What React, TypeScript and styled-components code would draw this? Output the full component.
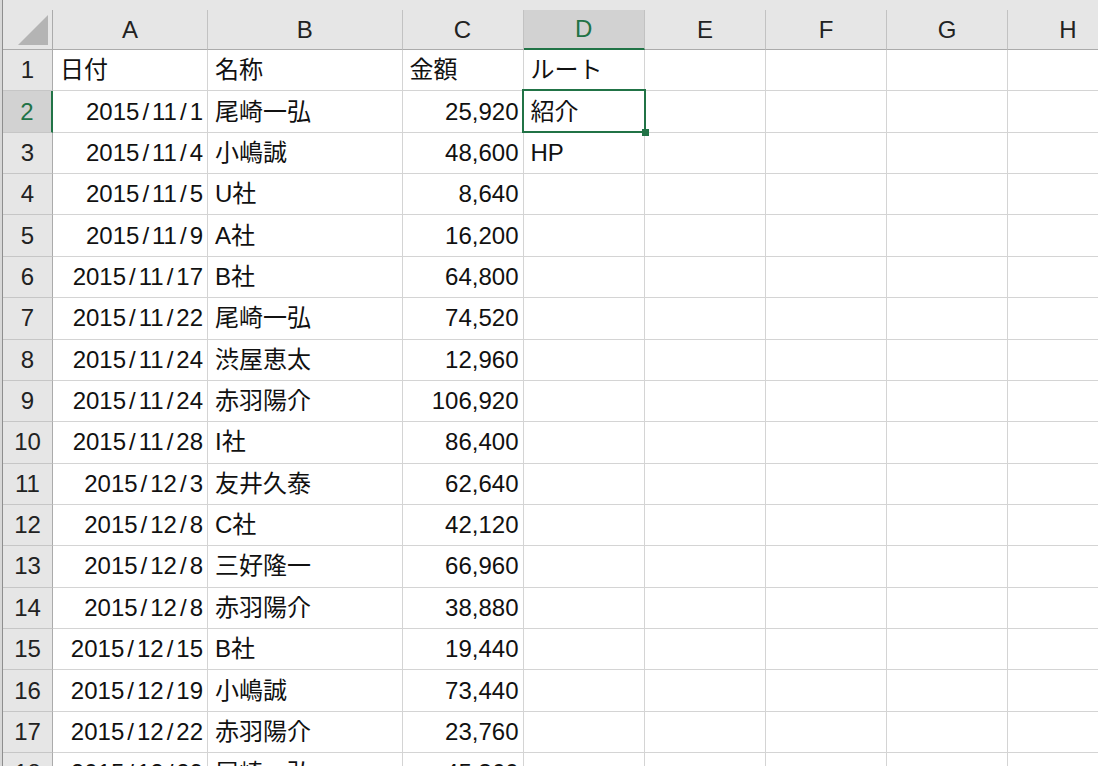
import React from "react";
import styled, { createGlobalStyle, css } from "styled-components";

const columns = ["A", "B", "C", "D", "E", "F", "G", "H"];
const colWidths = [155, 194.5, 121, 121.5, 121, 121, 121, 121];

const rows: string[][] = [
  ["日付", "名称", "金額", "ルート"],
  ["2015/11/1", "尾崎一弘", "25,920", "紹介"],
  ["2015/11/4", "小嶋誠", "48,600", "HP"],
  ["2015/11/5", "U社", "8,640", ""],
  ["2015/11/9", "A社", "16,200", ""],
  ["2015/11/17", "B社", "64,800", ""],
  ["2015/11/22", "尾崎一弘", "74,520", ""],
  ["2015/11/24", "渋屋恵太", "12,960", ""],
  ["2015/11/24", "赤羽陽介", "106,920", ""],
  ["2015/11/28", "I社", "86,400", ""],
  ["2015/12/3", "友井久泰", "62,640", ""],
  ["2015/12/8", "C社", "42,120", ""],
  ["2015/12/8", "三好隆一", "66,960", ""],
  ["2015/12/8", "赤羽陽介", "38,880", ""],
  ["2015/12/15", "B社", "19,440", ""],
  ["2015/12/19", "小嶋誠", "73,440", ""],
  ["2015/12/22", "赤羽陽介", "23,760", ""],
  ["2015/12/29", "尾崎一弘", "45,360", ""],
];

const activeRow = 2;
const activeCol = 3;

const GREEN = "#217346";

const GlobalStyle = createGlobalStyle`
  html, body {
    margin: 0;
    padding: 0;
    width: 1098px;
    height: 766px;
    overflow: hidden;
    background: #ffffff;
  }
  body {
    font-family: "Liberation Sans", "Noto Sans CJK JP", sans-serif;
  }
`;

const Page = styled.div`
  display: flex;
  width: 1098px;
  height: 766px;
  overflow: hidden;
`;

const LeftEdge = styled.div`
  flex: 0 0 3px;
  background: #d8d8d8;
  border-right: 1px solid #8e8e8e;
  box-sizing: border-box;
`;

const Main = styled.div`
  flex: 1;
  display: flex;
  flex-direction: column;
  min-width: 0;
`;

const TopStrip = styled.div`
  flex: 0 0 10px;
  background: #e6e6e6;
`;

const Sheet = styled.div`
  display: grid;
  grid-template-columns: 50px ${colWidths.map((w) => `${w}px`).join(" ")};
  grid-template-rows: 40px;
  grid-auto-rows: 41.37px;
  font-size: 24px;
  line-height: 1;
  color: #111;
`;

const Corner = styled.div`
  background: #e6e6e6;
  border-right: 1px solid #ababab;
  border-bottom: 1px solid #ababab;
  box-sizing: border-box;
  svg {
    display: block;
  }
`;

const ColHeader = styled.div<{ $active?: boolean }>`
  display: flex;
  align-items: center;
  justify-content: center;
  background: #e6e6e6;
  color: #222;
  border-right: 1px solid #c2c2c2;
  border-bottom: 1px solid #ababab;
  box-sizing: border-box;
  ${(p) =>
    p.$active &&
    css`
      background: #d2d2d2;
      color: ${GREEN};
      border-bottom: 2px solid ${GREEN};
    `}
`;

const RowHeader = styled.div<{ $active?: boolean }>`
  display: flex;
  align-items: center;
  justify-content: center;
  background: #e6e6e6;
  color: #222;
  border-right: 1px solid #ababab;
  border-bottom: 1px solid #c6c6c6;
  box-sizing: border-box;
  ${(p) =>
    p.$active &&
    css`
      background: #d2d2d2;
      color: ${GREEN};
      border-right: 2px solid ${GREEN};
    `}
`;

const Cell = styled.div<{ $align: "left" | "right"; $selected?: boolean }>`
  position: relative;
  display: flex;
  align-items: center;
  justify-content: ${(p) => (p.$align === "right" ? "flex-end" : "flex-start")};
  padding: ${(p) => (p.$align === "right" ? "0 4px 0 0" : "0 0 0 7px")};
  border-right: 1px solid #d4d4d4;
  border-bottom: 1px solid #d4d4d4;
  box-sizing: border-box;
  white-space: nowrap;
  overflow: visible;
  background: #fff;
  ${(p) =>
    p.$selected &&
    css`
      z-index: 2;
      &::before {
        content: "";
        position: absolute;
        left: -2px;
        top: -2px;
        right: -2px;
        bottom: -1px;
        border: 2px solid ${GREEN};
        pointer-events: none;
      }
      &::after {
        content: "";
        position: absolute;
        right: -5px;
        bottom: -4px;
        width: 7px;
        height: 7px;
        background: ${GREEN};
      }
    `}
`;

const Slash = styled.span`
  margin: 0 3px;
`;

const isNumeric = (text: string) => /^[0-9,/]+$/.test(text);

const renderText = (text: string) => {
  if (!text.includes("/")) return text;
  const parts = text.split("/");
  return parts.map((part, i) => (
    <React.Fragment key={i}>
      {i > 0 && <Slash>/</Slash>}
      {part}
    </React.Fragment>
  ));
};

const App = () => {
  return (
    <>
      <GlobalStyle />
      <Page>
        <LeftEdge />
        <Main>
          <TopStrip />
          <Sheet>
            <Corner>
              <svg width="49" height="39" viewBox="0 0 49 39">
                <polygon points="45,5 45,35 15,35" fill="#b4b4b4" />
              </svg>
            </Corner>
            {columns.map((c, i) => (
              <ColHeader key={c} $active={i === activeCol}>
                {c}
              </ColHeader>
            ))}
            {rows.map((row, r) => (
              <React.Fragment key={r}>
                <RowHeader $active={r + 1 === activeRow}>{r + 1}</RowHeader>
                {columns.map((c, i) => {
                  const text = row[i] ?? "";
                  return (
                    <Cell
                      key={c}
                      $align={r > 0 && isNumeric(text) ? "right" : "left"}
                      $selected={r + 1 === activeRow && i === activeCol}
                    >
                      {renderText(text)}
                    </Cell>
                  );
                })}
              </React.Fragment>
            ))}
          </Sheet>
        </Main>
      </Page>
    </>
  );
};

export default App;
